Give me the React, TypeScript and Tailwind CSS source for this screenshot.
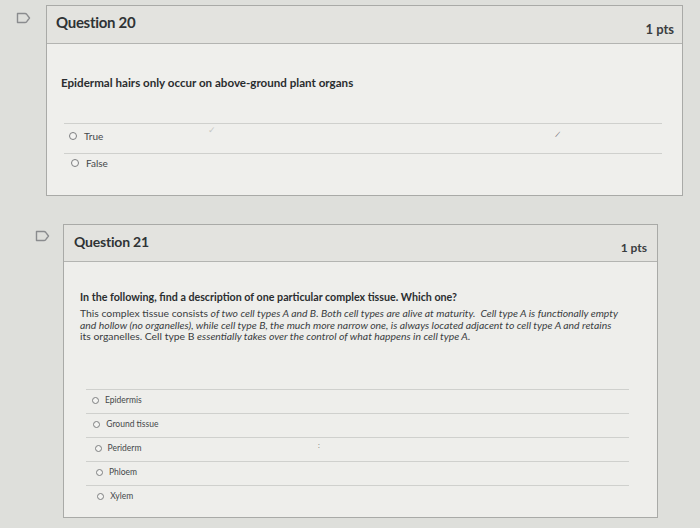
import React from "react";

function Flag() {
  return (
    <svg width="15" height="12" viewBox="0 0 15 12" fill="none">
      <path d="M1.5 1.5 H9 Q10 1.5 10.7 2.3 L13.5 6 L10.7 9.7 Q10 10.5 9 10.5 H1.5 Z" stroke="#8a8c8e" strokeWidth="1.4" strokeLinejoin="round" />
    </svg>
  );
}

function Radio({ size = 8, mt = 2 }: { size?: number; mt?: number }) {
  return (
    <span
      className="block flex-none rounded-full border border-[#7d7f80] bg-[#f4f4f2]"
      style={{ width: size, height: size, marginTop: mt }}
    />
  );
}

export default function App() {
  const opts21 = ["Epidermis", "Ground tissue", "Periderm", "Phloem", "Xylem"];
  return (
    <div
      className="w-[700px] h-[528px] overflow-hidden bg-[#dedfdb] pt-[5px] text-[#2f3335] leading-none"
      style={{ fontFamily: "Lato, 'Open Sans', 'Liberation Sans', sans-serif" }}
    >
      {/* Question 20 */}
      <div className="flex">
        <div className="w-[46px] flex justify-end pr-[15px] pt-[7px]">
          <Flag />
        </div>
        <div className="w-[637px] border border-[#a9aaa7] bg-[#efefec]">
          <div className="h-[38px] bg-[#e3e3df] border-b border-[#b3b4b1] flex justify-between pl-[9px] pr-[8px]">
            <div className="pt-[7px] text-[15px] leading-[18px] font-bold tracking-[-0.3px]">Question 20</div>
            <div className="pt-[15px] text-[13px] leading-[16px] font-bold text-[#3a3d3f]">1 pts</div>
          </div>
          <div className="pl-[14px] pt-[32px] pb-[12px] pr-[20px]">
            <div className="text-[11.6px] leading-[14px] font-bold text-[#2a2d2f]">
              Epidermal hairs only occur on above-ground plant organs
            </div>
            <div className="ml-[3px] mt-[33px]">
              <div className="relative h-[30px] border-t border-[#cfd0cd] flex items-start gap-[7px] pl-[5px] pt-[6px]">
                <Radio />
                <span className="text-[10px] leading-[12px] text-[#45484a]">True</span>
                <span className="absolute left-[144px] top-[1px] text-[9px] leading-[10px] text-[#c6c7c4]">✓</span>
                <span className="absolute left-[492px] top-[5px] text-[8px] leading-[10px] text-[#55585a] rotate-[20deg]">/</span>
              </div>
              <div className="h-[30px] border-t border-[#cfd0cd] flex items-start gap-[7px] pl-[7px] pt-[3px]">
                <Radio />
                <span className="text-[10px] leading-[12px] text-[#45484a]">False</span>
              </div>
            </div>
          </div>
        </div>
      </div>

      {/* Question 21 */}
      <div className="flex mt-[28px]">
        <div className="w-[63px] flex justify-end pr-[13px] pt-[6px]">
          <Flag />
        </div>
        <div className="w-[595px] border border-[#a9aaa7] bg-[#eeeeeb]">
          <div className="h-[37px] bg-[#e3e3df] border-b border-[#b3b4b1] flex justify-between pl-[10px] pr-[10px]">
            <div className="pt-[8px] text-[14px] leading-[17px] font-bold tracking-[-0.2px]">Question 21</div>
            <div className="pt-[15px] text-[12px] leading-[15px] font-bold text-[#3a3d3f]">1 pts</div>
          </div>
          <div className="pl-[16px] pt-[28px] pb-[8px]">
            <div className="text-[10.7px] leading-[13px] font-bold text-[#2a2d2f] whitespace-nowrap">
              In the following, find a description of one particular complex tissue. Which one?
            </div>
            <div className="mt-[5px] text-[10.4px] leading-[11.5px] text-[#3a3d3f] whitespace-nowrap">
              This complex tissue consists <i>of two cell types A and B. Both cell types are alive at maturity.&nbsp; Cell type A is functionally empty</i>
              <br />
              <i>and hollow (no organelles), while cell type B, the much more narrow one, is always located adjacent to cell type A and retains</i>
              <br />
              its organelles. Cell type B <i>essentially takes over the control of what happens in cell type A.</i>
            </div>
            <div className="ml-[6px] mr-[28px] mt-[46px]">
              {opts21.map((o, i) => (
                <div
                  key={o}
                  className="relative h-[24px] border-t border-[#cfd0cd] flex items-start gap-[6px] pt-[5px]"
                  style={{ paddingLeft: 6 + i * 1.3 }}
                >
                  <Radio size={7} mt={2} />
                  <span className="text-[8.5px] leading-[11px] text-[#45484a]">{o}</span>
                  {o === "Periderm" && (
                    <span className="absolute left-[232px] top-[2px] text-[7px] leading-[10px] text-[#777]">:</span>
                  )}
                </div>
              ))}
            </div>
          </div>
        </div>
      </div>
    </div>
  );
}
